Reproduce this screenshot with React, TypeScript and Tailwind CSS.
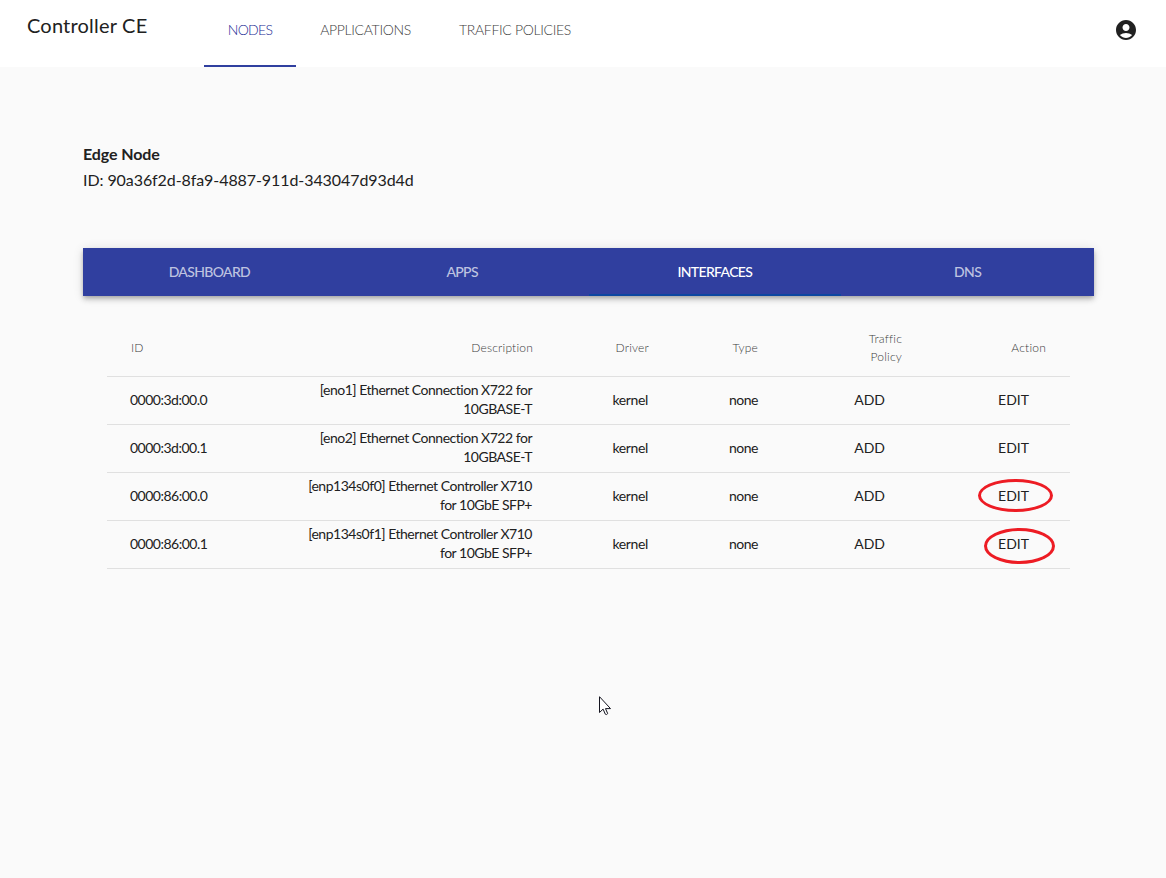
import { MdAccountCircle } from "react-icons/md";

const tabs = [
  { label: "DASHBOARD", active: false },
  { label: "APPS", active: false },
  { label: "INTERFACES", active: true },
  { label: "DNS", active: false },
];

const rows = [
  { id: "0000:3d:00.0", description: "[eno1] Ethernet Connection X722 for 10GBASE-T", mark: "" },
  { id: "0000:3d:00.1", description: "[eno2] Ethernet Connection X722 for 10GBASE-T", mark: "" },
  { id: "0000:86:00.0", description: "[enp134s0f0] Ethernet Controller X710 for 10GbE SFP+", mark: "left-[871px] top-[6px] h-[33px] w-[75px]" },
  { id: "0000:86:00.1", description: "[enp134s0f1] Ethernet Controller X710 for 10GbE SFP+", mark: "left-[877px] top-[7px] h-[36px] w-[71px]" },
];

const columns = "grid grid-cols-[190px_236px_116px_109px_144px_144px_24px] items-center border-b border-[#e0e0e0]";

function Header() {
  return (
    <header className="flex h-[67px] items-start bg-white pl-[27px] pr-7">
      <h1 className="mt-[9px] w-[177px] text-[20px] leading-8 tracking-[0.2px]">Controller CE</h1>
      <nav className="flex h-[67px] text-[14px] font-light leading-5 tracking-[-0.33px] text-[#3c3c3c]">
        <a className="w-[92px] border-b-2 border-[#303f9f] pt-5 text-center tracking-[-0.7px] text-[#1a2a94]">NODES</a>
        <a className="w-[139px] pt-5 text-center">APPLICATIONS</a>
        <a className="w-[160px] pt-5 text-center">TRAFFIC POLICIES</a>
      </nav>
      <MdAccountCircle className="ml-auto mt-[18px] size-6 text-[#212121]" />
    </header>
  );
}

function InterfaceTable() {
  return (
    <section className="mx-6 mt-6 text-right text-[14px]">
      <div className={`${columns} h-[57px] text-[12px] font-light leading-[18px] tracking-[0.2px] text-[#3c3c3c]`}>
        <span className="pl-6 text-left">ID</span>
        <span>Description</span>
        <span>Driver</span>
        <span>Type</span>
        <span className="pl-[100px]">Traffic Policy</span>
        <span>Action</span>
      </div>
      {rows.map((row) => (
        <div key={row.id} className={`${columns} relative h-12 pb-0.5 leading-[19px] tracking-[-0.5px]`}>
          <span className="pl-[23px] text-left">{row.id}</span>
          <span className="pb-0.5 pl-2 pr-px tracking-[-0.48px]">{row.description}</span>
          <span className="pr-px tracking-[-0.35px]">kernel</span>
          <span>none</span>
          <span className="pr-[17px] tracking-normal">ADD</span>
          <span className="pr-[17px] tracking-normal">EDIT</span>
          {row.mark && <i className={`absolute rounded-[50%] border-[3px] border-[#ed1c24] ${row.mark}`} />}
        </div>
      ))}
    </section>
  );
}

export default function App() {
  return (
    <div className="relative min-h-[878px] bg-[#fafafa] font-['Lato',sans-serif] text-[#212121]">
      <Header />
      <main className="ml-[83px] w-[1011px] pt-[74px]">
        <div className="text-[16px] leading-[26px]">
          <h2 className="font-bold tracking-[-0.1px]">Edge Node</h2>
          <p className="tracking-[-0.08px]">ID: 90a36f2d-8fa9-4887-911d-343047d93d4d</p>
        </div>
        <div className="mt-[55px] grid h-12 grid-cols-4 bg-[#303f9f] text-[14px] font-medium leading-5 tracking-[-0.65px] shadow-[0_2px_4px_-1px_rgba(0,0,0,0.2),0_4px_5px_0_rgba(0,0,0,0.14),0_1px_10px_0_rgba(0,0,0,0.12)]">
          {tabs.map((tab) => (
            <div
              key={tab.label}
              className={`flex items-center justify-center border-b-2 pt-0.5 ${tab.active ? "border-[#0d47a1] text-white" : "border-transparent text-white/70"}`}
            >
              {tab.label}
            </div>
          ))}
        </div>
        <InterfaceTable />
      </main>
      <svg className="absolute left-[599px] top-[696px]" width="13" height="20" viewBox="0 0 13 20">
        <path d="M.5.7v15.8l3.6-3.4 2.2 5.1q1.2 1 2.4-.6l-2.2-5h5z" fill="#fff" stroke="#14141f" strokeWidth="1" />
      </svg>
    </div>
  );
}
